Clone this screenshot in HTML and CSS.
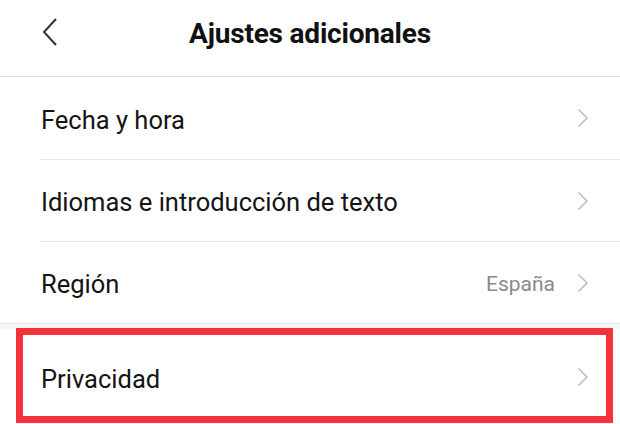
FILE: index.html
```html
<!DOCTYPE html>
<html lang="es">
<head>
<meta charset="utf-8">
<title>Ajustes adicionales</title>
<link rel="stylesheet" href="styles.css">
</head>
<body>
<div class="screen">
  <header class="topbar">
    <span class="back">
      <svg width="16" height="30" viewBox="0 0 16 30"><path d="M14 2 L2 15 L14 28" fill="none" stroke="#333" stroke-width="2"/></svg>
    </span>
    <h1 class="title">Ajustes adicionales</h1>
  </header>
  <ul class="list">
    <li class="row first"><span class="label">Fecha y hora</span><span class="chev"><svg width="12" height="20" viewBox="0 0 12 20"><path d="M1.5 1.5 L10 10 L1.5 18.5" fill="none" stroke="#bdbdbd" stroke-width="1.6"/></svg></span></li>
    <li class="row"><span class="label">Idiomas e introducción de texto</span><span class="chev"><svg width="12" height="20" viewBox="0 0 12 20"><path d="M1.5 1.5 L10 10 L1.5 18.5" fill="none" stroke="#bdbdbd" stroke-width="1.6"/></svg></span></li>
    <li class="row last"><span class="label">Región</span><span class="value">España</span><span class="chev"><svg width="12" height="20" viewBox="0 0 12 20"><path d="M1.5 1.5 L10 10 L1.5 18.5" fill="none" stroke="#bdbdbd" stroke-width="1.6"/></svg></span></li>
  </ul>
  <div class="gap"></div>
  <ul class="list">
    <li class="row highlighted"><span class="label">Privacidad</span><span class="chev"><svg width="12" height="20" viewBox="0 0 12 20"><path d="M1.5 1.5 L10 10 L1.5 18.5" fill="none" stroke="#bdbdbd" stroke-width="1.6"/></svg></span><span class="mark"></span></li>
  </ul>
</div>
</body>
</html>
```
FILE: styles.css
```css
* { box-sizing: border-box; }
html, body { margin: 0; padding: 0; background: #fff; }
body { font-family: Roboto, "Noto Sans", sans-serif; color: #111; }
.screen { width: 620px; height: 424px; overflow: hidden; background: #fff; }

.topbar {
  height: 77px;
  display: flex;
  align-items: center;
  justify-content: center;
  position: relative;
  border-bottom: 1px solid #e2e2e2;
}
.back { position: absolute; left: 42px; top: 17px; display: flex; }
.title {
  margin: 0;
  font-size: 28px;
  font-weight: 700;
  letter-spacing: -0.2px;
  color: #111;
  padding-bottom: 10px;
}

.list { list-style: none; margin: 0; padding: 0 0 0 41px; }
.row {
  height: 82px;
  display: flex;
  align-items: center;
  padding-right: 31px;
  border-bottom: 1px solid #e6e6e6;
  position: relative;
}
.row.first { height: 83px; }
.row.last { border-bottom: none; height: 81px; }
.label { flex: 1; font-size: 25.5px; color: #141414; padding-top: 3px; }
.value { font-size: 21px; color: #8a8a8a; margin-right: 22px; padding-top: 2px; }
.chev { display: flex; }

.gap { height: 6px; background: #f7f7f7; border-top: 1px solid #e8e8e8; }

.row.highlighted { height: 96px; border-bottom: none; }
.mark {
  position: absolute;
  left: -25px;
  top: -1px;
  width: 597px;
  height: 95px;
  border: 7px solid #f3323c;
  pointer-events: none;
}
```
